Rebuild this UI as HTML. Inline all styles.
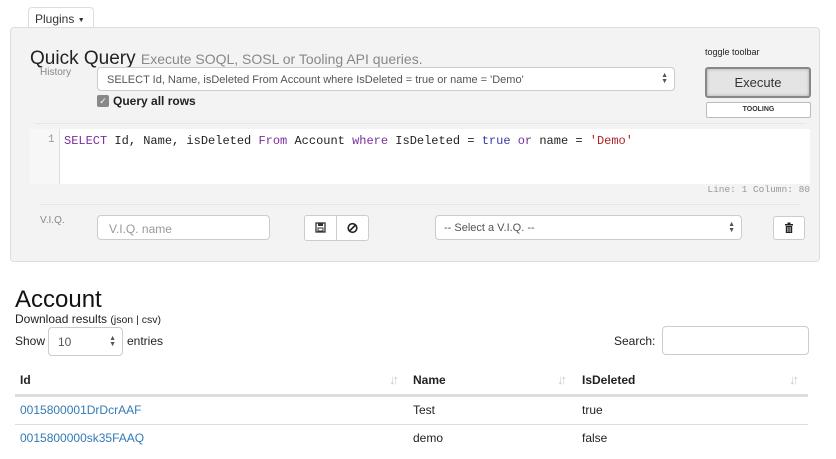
<!DOCTYPE html>
<html><head><meta charset="utf-8"><style>
*{box-sizing:border-box;margin:0;padding:0}
body{width:836px;height:459px;background:#fff;font-family:"Liberation Sans",Arial,sans-serif;color:#333;position:relative;overflow:hidden}
.a{position:absolute}
.panel{left:10px;top:27px;width:810px;height:235px;background:#f3f3f3;border:1px solid #ddd;border-radius:4px}
.tab{left:28px;top:7px;width:66px;height:21px;border:1px solid #ddd;border-bottom:none;border-radius:4px 4px 0 0;background:#fff;font-size:12px;padding:4px 0 0 6px}
.sel{background:#fff;border:1px solid #ccc;border-radius:4px;font-size:11px;color:#555}
.arr{position:absolute;right:6px;top:50%;transform:translateY(-50%);font-size:7px;line-height:6px;color:#555;text-align:center}
.btn{background:#fff;border:1px solid #ccc;border-radius:3px}
a{color:#337ab7;text-decoration:none}
.mono{font-family:"Liberation Mono",monospace}
.srt{color:#c8c8c8;font-weight:bold;font-size:13px;letter-spacing:-3px}
</style></head><body>
<div class="a tab">Plugins <span style="font-size:7px;vertical-align:1px">&#9660;</span></div>
<div class="a panel"></div>
<div class="a" style="left:30px;top:48px;font-size:19px;color:#222">Quick Query <span style="font-size:14px;color:#888">Execute SOQL, SOSL or Tooling API queries.</span></div>
<div class="a" style="left:40px;top:67px;font-size:10px;color:#888">History</div>
<div class="a sel" style="left:97px;top:67px;width:578px;height:24px;padding:6px 0 0 9px">SELECT Id, Name, isDeleted From Account where IsDeleted = true or name = 'Demo'<div class="arr">&#9650;<br>&#9660;</div></div>
<div class="a" style="left:97px;top:95px;width:12px;height:12px;background:#888;border-radius:2px;color:#fff;font-size:9px;text-align:center;line-height:12px">&#10003;</div>
<div class="a" style="left:113px;top:94px;font-size:12px;font-weight:bold;color:#222">Query all rows</div>
<div class="a" style="left:705px;top:47px;font-size:9px;color:#222">toggle toolbar</div>
<div class="a" style="left:705px;top:67px;width:106px;height:31px;background:#e4e4e4;border:2px solid #888;border-radius:3px;box-shadow:inset 0 0 3px #aaa;font-size:13px;text-align:center;line-height:27px">Execute</div>
<div class="a" style="left:706px;top:102px;width:105px;height:16px;background:#fff;border:1px solid #bbb;border-radius:2px;font-size:7px;font-weight:bold;text-align:center;line-height:14px">TOOLING</div>
<div class="a" style="left:35px;top:123px;width:770px;height:1px;background:#e6e6e6"></div>
<div class="a" style="left:30px;top:129px;width:30px;height:55px;background:#f7f7f7;border-right:1px solid #ddd"></div>
<div class="a" style="left:60px;top:129px;width:750px;height:55px;background:#fff"></div>
<div class="a mono" style="left:48px;top:134px;font-size:11px;color:#999">1</div>
<div class="a mono" style="left:64px;top:134px;font-size:12px;color:#222;white-space:pre"><span style="color:#7a2d9c">SELECT</span> Id, Name, isDeleted <span style="color:#7a2d9c">From</span> Account <span style="color:#7a2d9c">where</span> IsDeleted = <span style="color:#3a3aa0">true</span> <span style="color:#7a2d9c">or</span> name = <span style="color:#b22222">'Demo'</span></div>
<div class="a mono" style="left:690px;top:184px;font-size:9.5px;color:#999;width:120px;text-align:right">Line: 1 Column: 80</div>
<div class="a" style="left:40px;top:204px;width:760px;height:1px;background:#e6e6e6"></div>
<div class="a" style="left:40px;top:215px;font-size:10px;color:#888">V.I.Q.</div>
<div class="a sel" style="left:97px;top:215px;width:173px;height:25px;padding:6px 0 0 11px;font-size:12px;color:#999">V.I.Q. name</div>
<div class="a btn" style="left:304px;top:215px;width:33px;height:26px;border-radius:3px 0 0 3px">
<svg width="31" height="24" viewBox="0 0 31 24"><rect x="11" y="7" width="9" height="9" fill="none" stroke="#333" stroke-width="1.3"/><rect x="13" y="7" width="5" height="3" fill="#333"/><rect x="13" y="12" width="5" height="3" fill="none" stroke="#333" stroke-width="1"/></svg></div>
<div class="a btn" style="left:336px;top:215px;width:33px;height:26px;border-radius:0 3px 3px 0">
<svg width="31" height="24" viewBox="0 0 31 24"><circle cx="15.5" cy="12" r="4.3" fill="none" stroke="#222" stroke-width="1.6"/><line x1="12.5" y1="15" x2="18.5" y2="9" stroke="#222" stroke-width="1.6"/></svg></div>
<div class="a sel" style="left:435px;top:215px;width:307px;height:25px;padding:6px 0 0 8px">-- Select a V.I.Q. --<div class="arr">&#9650;<br>&#9660;</div></div>
<div class="a btn" style="left:773px;top:216px;width:32px;height:24px">
<svg width="30" height="22" viewBox="0 0 30 22"><rect x="11" y="7" width="8" height="1.5" fill="#222"/><rect x="13.5" y="5.5" width="3" height="1.5" fill="#222"/><rect x="11.8" y="9" width="6.4" height="7" fill="#222"/><rect x="13.5" y="10" width="0.8" height="5" fill="#fff"/><rect x="15.7" y="10" width="0.8" height="5" fill="#fff"/></svg></div>

<div class="a" style="left:15px;top:286px;font-size:24px;color:#111">Account</div>
<div class="a" style="left:15px;top:312px;font-size:12px;color:#222">Download results <span style="font-size:10.5px">(json | csv)</span></div>
<div class="a" style="left:15px;top:334px;font-size:12px;color:#222">Show</div>
<div class="a sel" style="left:48px;top:327px;width:75px;height:29px;padding:7px 0 0 9px;font-size:12px">10<div class="arr">&#9650;<br>&#9660;</div></div>
<div class="a" style="left:127px;top:334px;font-size:12px;color:#222">entries</div>
<div class="a" style="left:614px;top:334px;font-size:12px;color:#222">Search:</div>
<div class="a sel" style="left:662px;top:326px;width:147px;height:29px"></div>
<div class="a" style="left:15px;top:370px;width:793px;height:24px;font-size:12px;font-weight:bold;color:#222">
<span class="a" style="left:5px;top:3px">Id</span><span class="a" style="left:398px;top:3px">Name</span><span class="a" style="left:567px;top:3px">IsDeleted</span>
<span class="a srt" style="left:374px;top:2px">&#8595;&#8593;</span><span class="a srt" style="left:542px;top:2px">&#8595;&#8593;</span><span class="a srt" style="left:774px;top:2px">&#8595;&#8593;</span></div>
<div class="a" style="left:15px;top:394px;width:793px;height:3px;background:#ddd"></div>
<div class="a" style="left:20px;top:403px;font-size:12px"><a>0015800001DrDcrAAF</a></div>
<div class="a" style="left:413px;top:403px;font-size:12px;color:#222">Test</div>
<div class="a" style="left:582px;top:403px;font-size:12px;color:#222">true</div>
<div class="a" style="left:15px;top:424px;width:793px;height:1px;background:#ddd"></div>
<div class="a" style="left:20px;top:431px;font-size:12px"><a>0015800000sk35FAAQ</a></div>
<div class="a" style="left:413px;top:431px;font-size:12px;color:#222">demo</div>
<div class="a" style="left:582px;top:431px;font-size:12px;color:#222">false</div>
</body></html>
